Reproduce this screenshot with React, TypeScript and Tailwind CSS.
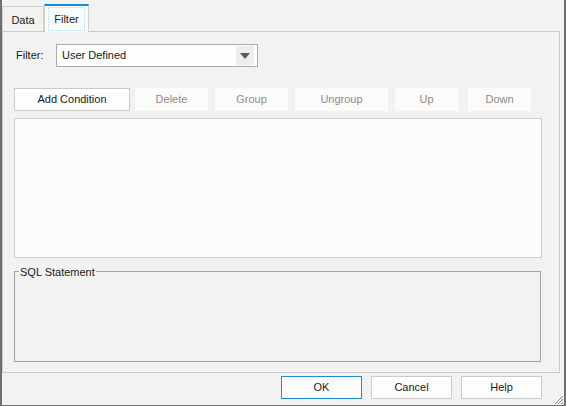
import React from "react";

const disabledBtn =
  "h-[23px] flex items-center justify-center bg-[#fbfbfa] text-[#8c8c8c]";

export default function App() {
  return (
    <div
      className="relative w-[566px] h-[406px] bg-[#f2f3f0] border-l-2 border-r-2 border-b border-[#6f6f6f] flex flex-col text-[11px] text-[#1a1a1a] select-none"
      style={{ fontFamily: '"Liberation Sans", Arial, sans-serif' }}
    >
      {/* tabs */}
      <div className="h-[31px] flex items-end shrink-0">
        <div className="w-[42px] h-[25px] border border-b-0 border-[#d0d0d0] flex items-center justify-center pt-[2px]">
          Data
        </div>
        <div className="relative z-10 -mb-px w-[45px] h-[28px] border-t-2 border-t-[#1a8ad9] border-x border-x-[#d0d0d0] bg-[#fafcfa] flex items-center justify-center">
          <span className="px-[5px] py-[3px] border border-dotted border-[#b6d9ee]">Filter</span>
        </div>
      </div>

      {/* panel */}
      <div className="mr-[4px] h-[342px] border border-[#cacaca] flex flex-col pl-[11px] pr-[16px] pt-[12px] shrink-0">
        <div className="flex items-center h-[23px]">
          <span className="w-[42px] pl-[2px]">Filter:</span>
          <div className="w-[202px] h-[23px] border border-[#ababab] bg-[#fcfefb] flex items-center">
            <span className="flex-1 pl-[5px]">User Defined</span>
            <div className="w-[18px] h-[19px] mr-[3px] bg-[#efedef] flex items-center justify-center">
              <svg width="10" height="6" viewBox="0 0 10 6">
                <path d="M0 0 H10 L5 6 Z" fill="#5a5a5a" />
              </svg>
            </div>
          </div>
        </div>

        <div className="mt-[21px] flex">
          <div className="w-[116px] h-[23px] flex items-center justify-center bg-[#fdfdfd] border border-[#cbcbcb]">
            Add Condition
          </div>
          <div className={`${disabledBtn} ml-[5px] w-[73px]`}>Delete</div>
          <div className={`${disabledBtn} ml-[7px] w-[73px]`}>Group</div>
          <div className={`${disabledBtn} ml-[7px] w-[93px]`}>Ungroup</div>
          <div className={`${disabledBtn} ml-[7px] w-[63px]`}>Up</div>
          <div className={`${disabledBtn} ml-[10px] w-[63px]`}>Down</div>
        </div>

        <div className="mt-[7px] h-[140px] w-[528px] bg-[#fbfcfb] border border-[#cfcfcf]" />

        <div className="relative mt-[13px] h-[91px] w-[527px] border border-[#a3a3a3]">
          <span className="absolute -top-[8px] left-[4px] px-[1px] bg-[#f2f3f0]">SQL Statement</span>
        </div>
      </div>

      {/* footer */}
      <div className="flex justify-end gap-[9px] pr-[22px] pt-[3px]">
        <div className="w-[81px] h-[23px] flex items-center justify-center bg-[#fdfdfd] border border-[#1f8ad6]">
          OK
        </div>
        <div className="w-[81px] h-[23px] flex items-center justify-center bg-[#fdfdfd] border border-[#cbcbcb]">
          Cancel
        </div>
        <div className="w-[81px] h-[23px] flex items-center justify-center bg-[#fdfdfd] border border-[#cbcbcb]">
          Help
        </div>
      </div>

      {/* resize grip */}
      <svg className="absolute right-0 bottom-0" width="12" height="12" viewBox="0 0 12 12">
        <path d="M11 3 L3 11 M11 6 L6 11 M11 9 L9 11" stroke="#8a8a8a" strokeWidth="1" />
      </svg>
    </div>
  );
}
